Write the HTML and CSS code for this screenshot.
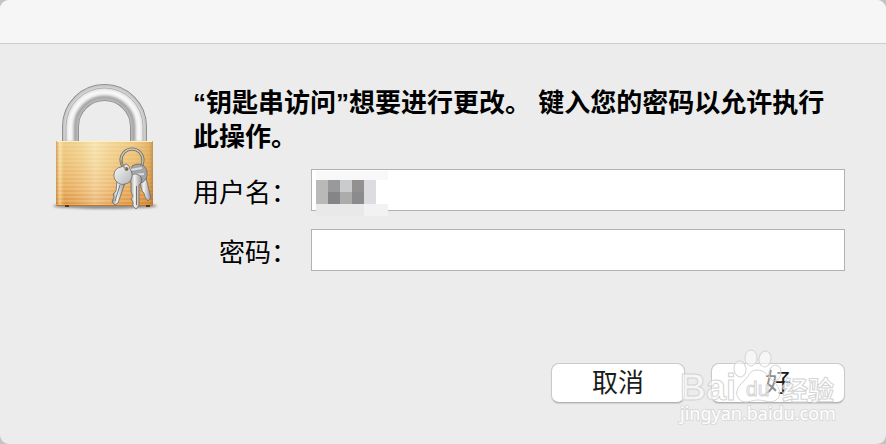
FILE: index.html
```
<!DOCTYPE html>
<html lang="zh-CN">
<head>
<meta charset="utf-8">
<meta name="viewport" content="width=device-width, initial-scale=1">
<title>钥匙串访问</title>
<link rel="stylesheet" href="styles.css">
</head>
<body>
<main class="dialog">
  <header class="titlebar"></header>
  <form class="content">
    <svg class="lock" viewBox="50 80 110 134" aria-hidden="true">
      <defs>
        <linearGradient id="gold" x1="0" y1="0" x2="0" y2="1">
          <stop offset="0" stop-color="#f3d79b"/><stop offset=".3" stop-color="#eecb88"/><stop offset=".7" stop-color="#e9b06a"/><stop offset="1" stop-color="#dc8e42"/>
        </linearGradient>
        <linearGradient id="sheen" x1="0" y1="0" x2="1" y2="0">
          <stop offset="0" stop-color="#b86a12" stop-opacity=".5"/><stop offset=".04" stop-color="#fff3c4" stop-opacity=".5"/><stop offset=".09" stop-color="#e0a040" stop-opacity=".2"/><stop offset=".4" stop-color="#fff8d8" stop-opacity=".35"/><stop offset=".8" stop-color="#e09a38" stop-opacity=".25"/><stop offset=".96" stop-color="#c87818" stop-opacity=".4"/><stop offset="1" stop-color="#8d4f10" stop-opacity=".5"/>
        </linearGradient>
        <linearGradient id="key" x1="0" y1="0" x2="1" y2="0">
          <stop offset="0" stop-color="#8c8c8c"/><stop offset=".4" stop-color="#f2f2f2"/><stop offset="1" stop-color="#8f9092"/>
        </linearGradient>
        <linearGradient id="disc" x1="0" y1="0" x2="1" y2="1">
          <stop offset="0" stop-color="#fafafa"/><stop offset="1" stop-color="#b4b5b7"/>
        </linearGradient>
        <pattern id="lines" width="4" height="4" patternUnits="userSpaceOnUse"><path d="M0 1h4" stroke="#fff1ba" stroke-opacity=".5"/></pattern>
        <filter id="soft" x="-20%" y="-200%" width="140%" height="500%"><feGaussianBlur stdDeviation="1.2"/></filter>
        <filter id="blend" x="-10%" y="-10%" width="120%" height="120%"><feGaussianBlur stdDeviation=".8"/></filter>
      </defs>
      <ellipse cx="105" cy="206" rx="52" ry="3" fill="#555" opacity=".6" filter="url(#soft)"/>
      <g fill="none">
        <path d="M70.500 141V126.500A34 34 0 0 1 138.500 126.500V141" stroke="#858585" stroke-width="17"/>
        <path d="M70.500 141V126.500A34 34 0 0 1 138.500 126.500V141" stroke="#c2c2c2" stroke-width="15.400"/>
        <path d="M69.500 141V126.500A35 35 0 0 1 139.500 126.500V141" stroke="#e6e6e6" stroke-width="9" filter="url(#blend)"/>
        <path d="M70 141V126.500A34.500 34.500 0 0 1 139 126.500V141" stroke="#fff" stroke-width="2.500" filter="url(#blend)"/>
        <path d="M75.500 141V126.500A29 29 0 0 1 133.500 126.500V141" stroke="#a0a0a0" stroke-width="2.500" filter="url(#blend)"/>
        <path d="M66 141V126.500A38.500 38.500 0 0 1 143 126.500V141" stroke="#b2b2b2" stroke-width="1"/>
      </g>
      <rect x="56" y="141" width="97" height="65" rx="1" fill="url(#gold)"/>
      <rect x="56" y="141" width="97" height="65" rx="1" fill="url(#lines)"/>
      <rect x="56" y="141" width="97" height="65" rx="1" fill="url(#sheen)"/>
      <path d="M57 141.500h95" stroke="#fff0bd"/><path d="M57 205.500h95" stroke="#bd7528"/>
      <path d="M65 206h4M146 206h4" stroke="#553916" stroke-width="2"/>
      <g stroke="#5f5f5f" stroke-width=".7" stroke-linejoin="round">
        <circle cx="132" cy="160" r="11" fill="none" stroke="#6f6a60" stroke-width="3"/>
        <circle cx="132" cy="160" r="11" fill="none" stroke="#c9c6be" stroke-width="1.300"/>
        <path d="M139 180L146 178L151 198L148 201L145 197L144 193L142 191Z" fill="url(#key)"/>
        <path d="M132 166C138 162 147 165 147 172C148 178 144 184 138 183L131 181Z" fill="#a2a4a8"/>
        <path d="M130 170L142 168M131 175L144 174" stroke="#dcdddf" stroke-width="2"/>
        <path d="M131 183C128 179 130 174 136 174C142 175 144 181 139 185L139 206L136 209L133 206V202L131 199L133 196L131 192Z" fill="url(#key)"/>
        <path d="M136.500 186V205" stroke="#727272" stroke-width="1"/>
        <path d="M117 181L125 183L118 203L115 205L112 202L114 197L113 194L116 191Z" fill="url(#key)"/>
        <path d="M120 185L115 201" stroke="#777" stroke-width="1"/>
        <path d="M121 167L124 166L125 164Q129 164 130 169C134 174 132 183 125 184C119 186 113 180 114 174Q115 168 121 167Z" fill="url(#disc)"/>
        <circle cx="126.500" cy="169" r="1.500" fill="#77624a"/>
        <path d="M126 169C122 166 121 163 121 160" fill="none" stroke="#99958c" stroke-width="1.400"/>
      </g>
    </svg>
    <div class="body">
      <h1 class="message">“钥匙串访问”想要进行更改。 键入您的密码以允许执行此操作。</h1>
      <div class="fields">
        <label class="label" for="user">用户名：</label>
        <div class="control">
          <input class="input" id="user" type="text" autocomplete="off">
          <svg class="mosaic" viewBox="0 0 72 45" shape-rendering="crispEdges" aria-hidden="true">
            <path fill="#f8f8f8" d="M0 0h72v9H0z"/>
            <path fill="#bab9b8" d="M0 9h12v24H0z"/>
            <path fill="#98989d" d="M12 9h12v12H12z"/><path fill="#858589" d="M12 21h12v12H12z"/>
            <path fill="#cacbcd" d="M24 9h12v12H24z"/><path fill="#acadab" d="M24 21h12v12H24z"/>
            <path fill="#92918f" d="M36 9h12v12H36z"/><path fill="#8b8b8e" d="M36 21h12v12H36z"/>
            <path fill="#dcdce1" d="M48 9h12v24H48z"/><path fill="#fff" d="M60 9h12v24H60z"/>
            <path fill="#e9e9e9" d="M0 33h48v12H0z"/><path fill="#f2f2f2" d="M48 33h24v12H48z"/>
          </svg>
        </div>
        <label class="label" for="password">密码：</label>
        <div class="control"><input class="input" id="password" type="password"></div>
      </div>
    </div>
    <div class="actions">
      <button class="button" type="button">取消</button>
      <button class="button" type="button">好</button>
    </div>
  </form>
  <svg class="watermark" viewBox="0 0 166 80" role="img" aria-label="Baidu 经验">
    <g class="mark">
      <text class="brand" x="3" y="52">Bai</text>
      <ellipse cx="63" cy="21" rx="6" ry="8" transform="rotate(-8 63 21)"/>
      <ellipse cx="74" cy="10" rx="6" ry="8"/>
      <ellipse cx="88" cy="11" rx="6" ry="8" transform="rotate(10 88 11)"/>
      <ellipse cx="98" cy="25" rx="6" ry="8" transform="rotate(12 98 25)"/>
      <path d="M80 22C88 22 91 28 96 33C102 38 105 45 101 50C96 57 88 52 81 52C74 52 68 57 62 51C57 45 61 38 67 33C72 28 73 22 80 22Z"/>
      <text class="du" x="69" y="48">du</text>
      <text class="product" x="105" y="52">经验</text>
    </g>
    <text class="domain" x="3" y="72">jingyan.baidu.com</text>
  </svg>
</main>
</body>
</html>
```
FILE: styles.css
```
* {
  box-sizing: border-box;
}

body {
  margin: 0;
  background: #c4c4c6;
  color: #000;
  font-family: "Liberation Sans", "Noto Sans CJK SC", sans-serif;
  font-size: 26px;
  line-height: 34px;
}

.dialog {
  position: relative;
  display: flex;
  flex-direction: column;
  min-height: 100vh;
  overflow: hidden;
  border-radius: 9px;
  background: #ececec;
}

.titlebar {
  height: 44px;
  border-bottom: 1px solid #cdcdcd;
  background: #f6f6f6;
}

.content {
  display: grid;
  flex: 1;
  grid-template-columns: 110px 1fr;
  grid-template-rows: auto 1fr;
  column-gap: 33px;
  padding: 36px 41px 41px 50px;
}

.lock {
  display: block;
  width: 110px;
  height: 134px;
}

.body {
  padding-top: 6px;
}

.message {
  margin: 0 0 15px;
  font-size: 26px;
  font-weight: 700;
}

.fields {
  display: grid;
  grid-template-columns: auto 1fr;
  align-items: center;
  gap: 18px 14px;
}

.label {
  padding-top: 6px;
  text-align: right;
}

.control {
  position: relative;
}

.input {
  display: block;
  width: 100%;
  height: 42px;
  padding: 0 6px;
  border: 1px solid #b2b2b2;
  border-radius: 0;
  outline: 0;
  background: #fff;
  font: inherit;
}

.mosaic {
  position: absolute;
  top: 2px;
  left: 5px;
  width: 72px;
  height: 45px;
}

.actions {
  display: flex;
  grid-column: 1 / -1;
  align-self: end;
  justify-content: flex-end;
  gap: 26px;
}

.button {
  width: 134px;
  height: 40px;
  padding: 0;
  border: 1px solid #cacaca;
  border-bottom-color: #b2b2b2;
  border-radius: 8px;
  background: #fff;
  box-shadow: 0 1px 1px #00000020;
  color: #1c1c1c;
  font: inherit;
}

.watermark {
  position: absolute;
  right: 43px;
  bottom: 16px;
  width: 166px;
  height: 80px;
  overflow: visible;
  pointer-events: none;
}

.mark {
  fill: #ffffff80;
  stroke: #d4d4d4;
  stroke-width: 1px;
}

.brand {
  font-family: "Liberation Sans", sans-serif;
  font-size: 36px;
  font-weight: 700;
}

.du {
  font-family: "Liberation Sans", sans-serif;
  font-size: 21px;
}

.product {
  font-family: "Noto Sans CJK SC", sans-serif;
  font-size: 26px;
  font-weight: 700;
}

.domain {
  fill: #fff;
  stroke: #dadada;
  stroke-width: 2px;
  paint-order: stroke;
  font-family: "Noto Sans", sans-serif;
  font-size: 18px;
}
```
